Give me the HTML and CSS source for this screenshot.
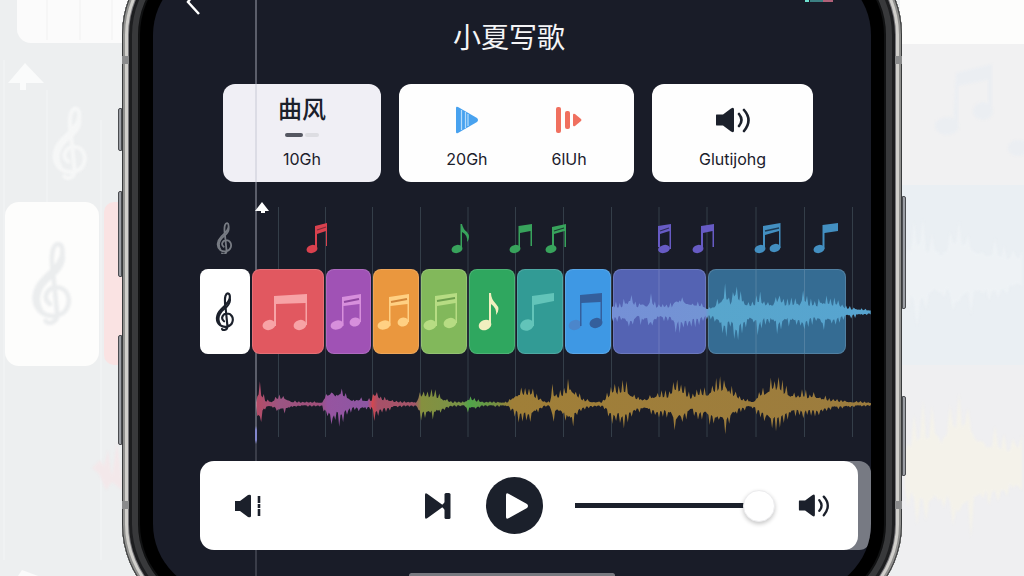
FILE: index.html
```html
<!DOCTYPE html>
<html lang="zh-CN">
<head>
<meta charset="utf-8">
<meta name="viewport" content="width=device-width, initial-scale=1">
<title>小夏写歌</title>
<link rel="stylesheet" href="styles.css">
</head>
<body>
<svg class="defs" width="0" height="0" aria-hidden="true">
  <symbol id="clef" viewBox="0 0 20 40">
    <path d="M9 30C5 27 8 22 12 22C17 22 19 27 17.500 31C16 36 9 37 5 34C0 30 1 23 6 18C10 14 15 10 15 5C15 1 12 0 10.500 4C9 9 10.500 14 11 20L12.500 35C12.500 39 8 40 7 38" fill="none" stroke="currentColor" stroke-width="2.200" stroke-linecap="round"/>
    <path d="M5 34C-1 29 1 22 8 17C13 13 15 9 15 4C18 9 15 14 10 18C4 23 3 28 6 33Z" fill="currentColor"/>
  </symbol>
  <symbol id="speaker" viewBox="0 0 36 28">
    <path d="M1.500 8.500H8L16 2.500Q19 0.500 19 3.500V24.500Q19 27.500 16 25.500L8 19.500H1.500Q1 19.500 1 18.500V9.500Q1 8.500 1.500 8.500Z" fill="currentColor"/>
    <path d="M24 8Q29 14 24 20M29 4Q38 14 29 25" fill="none" stroke="currentColor" stroke-width="2.600" stroke-linecap="round"/>
  </symbol>
</svg>

<svg class="backdrop" viewBox="0 0 1024 576" preserveAspectRatio="xMidYMid slice" aria-hidden="true">
  <rect width="1024" height="576" fill="#edeff0"/>
  <rect x="17" y="-30" width="200" height="73" rx="14" fill="#fbfbfb"/>
  <path d="M47 0V40M80 0V40M112 0V40" stroke="#f6f6f6" stroke-width="2"/>
  <path d="M25 63L44 83H26V90H20V83H8Z" fill="#fafbfb"/>
  <path d="M4 60V560M47 90V202M101 120V560" stroke="#f0f2f3" stroke-width="2"/>
  <g color="#f6f7f7" class="soft"><use href="#clef" x="47" y="106" width="46" height="74"/></g>
  <rect x="104" y="202" width="40" height="163" rx="10" fill="#fae3e3"/>
  <rect x="5" y="202" width="94" height="164" rx="14" fill="#fdfdfc"/>
  <g color="#ebedee" class="soft"><use href="#clef" x="27" y="241" width="50" height="84"/></g>
  <path class="soft" d="M92 468L100 460L104 466L108 450L112 476L117 442L122 480V490L112 482L106 490L99 474Z" fill="#f3e8ea"/>
  <path d="M22 570L38 576H18Z" fill="#fbfbfb"/>
  <rect x="900" width="124" height="44" fill="#fdfdfc"/>
  <rect x="900" y="44" width="124" height="141" fill="#f1f1f2"/>
  <rect x="900" y="185" width="124" height="180" fill="#eaeff3"/>
  <rect x="900" y="365" width="124" height="211" fill="#efeff1"/>
  <g class="soft" fill="#ebeef2">
    <path d="M956 73L992 64V112H988V80L958 86V128H953Z"/>
    <ellipse cx="947" cy="126" rx="12" ry="9"/><ellipse cx="983" cy="111" rx="10" ry="9"/><ellipse cx="1018" cy="148" rx="10" ry="8"/>
  </g>
  <path id="wave-back-cool" class="soft" fill="#eef2f5"/>
  <path id="wave-back-warm" class="soft" fill="#f4f2ea"/>
</svg>

<div class="phone">
  <i class="key key-left key-a"></i><i class="key key-left key-b"></i><i class="key key-left key-c"></i>
  <i class="key key-right key-d"></i><i class="key key-right key-e"></i>
  <i class="band band-left band-top"></i><i class="band band-right band-top"></i>
  <i class="band band-left band-low"></i><i class="band band-right band-low"></i>
  <main class="screen">
    <header class="top">
      <button class="icon-btn" type="button" aria-label="返回">
        <svg width="16" height="18" viewBox="0 0 16 18"><path d="M8 -5L3 2L14 14" fill="none" stroke="#fff" stroke-width="2.500"/></svg>
      </button>
      <h1 class="title">小夏写歌</h1>
      <svg class="status" width="28" height="3" viewBox="0 0 28 3" aria-hidden="true"><path d="M0 0H4V2H0Z" fill="#6ee0cf"/><path d="M5 0H18V2H5Z" fill="#3c7f82"/><path d="M18 0H28V2H18Z" fill="#b06078"/></svg>
    </header>

    <section class="cards">
      <button class="card card-style" type="button">
        <span class="card-title">曲风</span>
        <span class="pager"><i class="dash dash-on"></i><i class="dash"></i></span>
        <span class="label">10Gh</span>
      </button>
      <div class="card card-pair">
        <button class="option" type="button">
          <svg width="24" height="28" viewBox="0 0 24 28"><path d="M1 2Q1 0 3 1L22 12Q24 14 22 16L3 27Q1 28 1 26Z" fill="#48a2ef"/><path d="M6.500 4V24M10.500 6V22M13 8V20" stroke="#b5dcfb" stroke-width="1.200"/></svg>
          <span class="label">20Gh</span>
        </button>
        <button class="option" type="button">
          <svg width="26" height="28" viewBox="0 0 26 28"><g fill="#f0705f"><rect x="0" y="1" width="5" height="26" rx="2"/><rect x="9" y="5" width="5" height="18" rx="2"/><path d="M17 9Q17 7 19 8L25 13Q26 14 25 15L19 20Q17 21 17 19Z"/></g></svg>
          <span class="label">6lUh</span>
        </button>
      </div>
      <button class="card card-sound" type="button">
        <svg width="36" height="28"><use href="#speaker"/></svg>
        <span class="label">Glutijohg</span>
      </button>
    </section>

    <section class="timeline">
      <svg class="rules" viewBox="0 0 671 230" preserveAspectRatio="none" aria-hidden="true"><path d="M78.500 0V230M125.500 0V230M172.500 0V230M220.500 0V230M268 0V230M315.500 0V230M363.500 0V230M411.500 0V230M459 0V230M507 0V230M556 0V230M604.500 0V230M652.500 0V230" stroke="#343e49" stroke-width="1"/></svg>
      <svg class="notes" viewBox="0 0 671 32" aria-hidden="true">
        <g color="#777b83"><use href="#clef" x="16" y="0" width="17" height="33"/></g>
        <g fill="#d9414e"><ellipse cx="112" cy="27" rx="5.500" ry="4" transform="rotate(-15 112 27)"/><path d="M115 4L127 1V24H126V9L117 12V27H115Z"/><path d="M117 8L126 5" stroke="#7c2b3a" stroke-width="1.200"/></g>
        <g fill="#38a35c"><ellipse cx="257" cy="27" rx="5.500" ry="4" transform="rotate(-15 257 27)"/><path d="M260.500 2H262Q263 7 267 10Q271 15 267 20Q268 13 262 10V27H260.500Z"/></g>
        <g fill="#38a35c"><ellipse cx="315" cy="27" rx="5.500" ry="4" transform="rotate(-15 315 27)"/><path d="M318.500 4L332 2V24H330.500V9L320 11V27H318.500Z"/></g>
        <g fill="#38a35c"><ellipse cx="351" cy="27" rx="5.500" ry="4" transform="rotate(-15 351 27)"/><path d="M352 5L366 2V25H364.500V9L354 12V27H352Z"/><path d="M354 9L364 6" stroke="#1b3b31" stroke-width="1.200"/></g>
        <g fill="#675bc4"><ellipse cx="464" cy="27" rx="6" ry="4" transform="rotate(-15 464 27)"/><path d="M458 4L471 2V27H469.500V9L460 12V25H458Z"/><path d="M460 9L469 6" stroke="#2c2c57" stroke-width="1.200"/></g>
        <g fill="#675bc4"><ellipse cx="498" cy="27" rx="5.500" ry="4" transform="rotate(-15 498 27)"/><path d="M501 4L514 2V25H512.500V9L503 11V27H501Z"/></g>
        <g fill="#438fc1"><ellipse cx="560" cy="27" rx="5.500" ry="4" transform="rotate(-15 560 27)"/><ellipse cx="575" cy="26" rx="5.500" ry="4" transform="rotate(-15 575 26)"/><path d="M563 4L580.500 1V26H579V9L565 13V27H563Z"/><path d="M565 9L579 6" stroke="#1b3a55" stroke-width="1.400"/></g>
        <g fill="#438fc1"><ellipse cx="619" cy="27" rx="5.500" ry="4" transform="rotate(-15 619 27)"/><path d="M622.500 3L638 1V9L624.500 11V27H622.500Z"/></g>
      </svg>

      <div class="lane">
        <div class="clip clip-clef"><svg width="20" height="39"><use href="#clef"/></svg></div>
        <div class="clip clip-note clip-red"><svg width="46" height="40" viewBox="0 0 46 40"><g fill="#f7a3a6"><ellipse cx="7" cy="33" rx="6.500" ry="5" transform="rotate(-15 7 33)"/><ellipse cx="38" cy="33" rx="6.500" ry="5" transform="rotate(-15 38 33)"/><path d="M12 4L45 2V33H43.500V11L14 12V34H12Z"/></g></svg></div>
        <div class="clip clip-note clip-purple"><svg width="33" height="40" viewBox="0 0 33 40"><g fill="#d78fdc"><ellipse cx="8" cy="33" rx="6.500" ry="4.500" transform="rotate(-15 8 33)"/><ellipse cx="26" cy="30" rx="5.500" ry="4.500" transform="rotate(-15 26 30)"/><path d="M13 5L32 2V30H30.500V12L14.500 14V34H13Z"/></g><path d="M15 10L30 7" stroke="#8f469f" stroke-width="1.800"/></svg></div>
        <div class="clip clip-note clip-orange"><svg width="33" height="40" viewBox="0 0 33 40"><g fill="#ffd083"><ellipse cx="7" cy="33" rx="6.500" ry="4.500" transform="rotate(-15 7 33)"/><ellipse cx="26" cy="30" rx="5.500" ry="4.500" transform="rotate(-15 26 30)"/><path d="M12 5L32 2V30H30.500V12L13.500 14V34H12Z"/></g><path d="M14 10L30 7" stroke="#d08439" stroke-width="1.800"/></svg></div>
        <div class="clip clip-note clip-lime"><svg width="36" height="40" viewBox="0 0 36 40"><g fill="#b7dc83"><ellipse cx="7" cy="33" rx="6.500" ry="5" transform="rotate(-15 7 33)"/><ellipse cx="27" cy="31" rx="6.500" ry="5" transform="rotate(-15 27 31)"/><path d="M12 4L34 1V31H32.500V11L14 14V34H12Z"/></g><path d="M14 9L32 6" stroke="#6c9e4d" stroke-width="1.800"/></svg></div>
        <div class="clip clip-note clip-green"><svg width="24" height="40" viewBox="0 0 24 40"><g fill="#f1efbf"><ellipse cx="8" cy="33" rx="6.500" ry="5" transform="rotate(-20 8 33)"/><path d="M12 1H14Q14 7 19 12Q24 17 19 23Q20 16 14 12V34H12Z"/></g></svg></div>
        <div class="clip clip-note clip-teal"><svg width="36" height="40" viewBox="0 0 36 40"><g fill="#62c4b9"><ellipse cx="8" cy="33" rx="7" ry="5.500" transform="rotate(-20 8 33)"/><path d="M13 4L35 1V9L15 13V34H13Z"/></g></svg></div>
        <div class="clip clip-note clip-blue"><svg width="36" height="40" viewBox="0 0 36 40"><ellipse cx="8" cy="33" rx="6.500" ry="5" transform="rotate(-15 8 33)" fill="#4b86cb"/><g fill="#345f9c"><ellipse cx="29" cy="31" rx="6.500" ry="5" transform="rotate(-15 29 31)"/><path d="M13 3L35 1V31H33.500V10L14.500 11V34H13Z"/></g></svg></div>
        <div class="clip clip-indigo"></div>
        <div class="clip clip-steel"></div>
        <svg class="lane-wave" viewBox="0 0 671 85" preserveAspectRatio="none" aria-hidden="true">
          <defs><linearGradient id="cool" gradientUnits="userSpaceOnUse" x1="412" y1="0" x2="671" y2="0"><stop offset="0" stop-color="#7590d6"/><stop offset=".36" stop-color="#7394d4"/><stop offset=".38" stop-color="#58a6cc"/><stop offset="1" stop-color="#57a4d0"/></linearGradient></defs>
          <path d="M459 1V84M556 1V84M604.500 1V84" stroke="#fff" stroke-opacity=".14"/>
          <path id="wave-vocal" fill="url(#cool)"/>
        </svg>
      </div>

      <svg class="mix" viewBox="0 0 671 62" preserveAspectRatio="none" aria-hidden="true">
        <defs><linearGradient id="warm" gradientUnits="userSpaceOnUse" x1="0" y1="0" x2="671" y2="0">
          <stop offset=".08" stop-color="#b84a62"/><stop offset=".12" stop-color="#9b5583"/><stop offset=".175" stop-color="#a04f78"/><stop offset=".19" stop-color="#9654a0"/><stop offset=".25" stop-color="#8d57a3"/><stop offset=".257" stop-color="#d34750"/><stop offset=".265" stop-color="#a75068"/><stop offset=".32" stop-color="#a5566a"/><stop offset=".33" stop-color="#85903f"/><stop offset=".39" stop-color="#789348"/><stop offset=".402" stop-color="#50a54a"/><stop offset=".44" stop-color="#748f42"/><stop offset=".465" stop-color="#a07f38"/><stop offset="1" stop-color="#9c7c3e"/></linearGradient></defs>
        <path id="wave-mix" fill="url(#warm)"/>
      </svg>
    </section>

    <section class="dock">
      <div class="player">
        <button class="icon-btn" type="button" aria-label="静音"><svg width="28" height="24" viewBox="0 0 28 24"><path d="M1 7H6L14 1Q17 0 17 2V22Q17 24 14 23L6 17H1Z" fill="#1b202b"/><path d="M25 2V22" stroke="#1b202b" stroke-width="2.600" stroke-dasharray="7 1 4 1"/></svg></button>
        <button class="icon-btn skip" type="button" aria-label="下一首"><svg width="28" height="28" viewBox="0 0 28 28"><path d="M1 3Q1 0 3.500 2L18 12.500Q20.500 14 18 15.500L3.500 26Q1 28 1 25Z" fill="#1b202b"/><rect x="20.500" y="1" width="6" height="26" rx="1.500" fill="#1b202b"/><path d="M17 14L21 10V18Z" fill="#1b202b"/></svg></button>
        <button class="icon-btn play" type="button" aria-label="播放"><svg width="24" height="28" viewBox="0 0 24 28"><path d="M1 3Q1 0 4 2L22 12Q24 14 22 16L4 26Q1 28 1 25Z" fill="#fff"/></svg></button>
        <input class="volume" type="range" min="0" max="100" value="100" aria-label="音量">
        <button class="icon-btn" type="button" aria-label="最大音量"><svg class="loud" width="32" height="25"><use href="#speaker"/></svg></button>
      </div>
      <div class="next-panel"></div>
    </section>
    <div class="home"></div>

    <div class="playhead" aria-hidden="true">
      <svg class="flag" width="16" height="13" viewBox="0 0 16 13"><path d="M8 1L15 10H11V12H7V10H1Z" fill="#fff"/></svg>
    </div>
  </main>
</div>
<script src="waves.js"></script>
</body>
</html>
```
FILE: styles.css
```css
* { box-sizing: border-box; }
html { height: 100%; overflow: hidden; }
body {
  position: relative;
  margin: 0;
  height: 100%;
  overflow: hidden;
  padding: 0 122px;
  background: #edeff0;
  font-family: Inter, Roboto, "Noto Sans CJK SC", sans-serif;
  color: #1b202b;
}
button {
  border: 0;
  padding: 0;
  margin: 0;
  background: none;
  color: inherit;
  font: inherit;
  cursor: pointer;
}
svg { display: block; }
.defs { position: absolute; }
.backdrop { position: absolute; inset: 0; width: 100%; height: 100%; }
.soft { filter: blur(1px); }

.phone {
  position: relative;
  margin: 0;
  top: -65px;
  padding: 31px;
  border-radius: 100px;
  background: #000;
  box-shadow:
    inset 0 0 0 1px #393b3c,
    inset 0 0 0 3px #8f8f8d,
    inset 0 0 0 6px #d0cfcb,
    inset 0 0 0 7px #77767a,
    inset 0 0 0 10px #1d1e20,
    inset 0 0 0 16px #38393b,
    inset 0 0 0 18px #101112;
}
.key { position: absolute; width: 4px; border: 1px solid #4a4c50; background: #9b9ea4; }
.key-left { left: -4px; border-radius: 2px 0 0 2px; }
.key-right { right: -4px; border-radius: 0 2px 2px 0; }
.key-a { top: 173px; height: 43px; }
.key-b { top: 256px; height: 86px; }
.key-c { top: 400px; height: 110px; }
.key-d { top: 261px; height: 113px; }
.key-e { top: 461px; height: 80px; }
.band { position: absolute; width: 7px; height: 8px; background: #8a8b8c; }
.band-left { left: 0; }
.band-right { right: 0; }
.band-top { top: 121px; }
.band-low { top: 566px; }

.screen {
  position: relative;
  overflow: hidden;
  padding: 34px 0 15px;
  border-radius: 69px;
  background: #191c28;
}
.top {
  display: grid;
  grid-template-columns: 1fr auto 1fr;
  align-items: start;
  height: 84px;
  padding: 0 38px 0 32px;
}
.title {
  margin: 0;
  padding-top: 18px;
  font-size: 28px;
  line-height: 40px;
  font-weight: 400;
  color: #f4f4f6;
}
.status { justify-self: end; }

.cards { display: flex; gap: 18px; padding: 0 58px 0 70px; }
.card {
  display: flex;
  height: 98px;
  border-radius: 12px;
  background: #fefefe;
}
.card-style { flex: 158; flex-direction: column; align-items: center; background: #f0eff5; padding-top: 10px; }
.card-pair { flex: 235; justify-content: center; gap: 64px; }
.card-sound { flex: 161; flex-direction: column; align-items: center; padding-top: 22px; gap: 14px; }
.card-title { font-size: 24px; line-height: 32px; font-weight: 500; }
.pager { display: flex; gap: 2px; padding: 7px 0 11px; }
.dash { width: 14px; height: 4px; border-radius: 2px; background: #dddde2; }
.dash-on { width: 18px; background: #555761; }
.label { font-size: 16px; line-height: 22px; }
.option { display: flex; flex-direction: column; align-items: center; padding-top: 22px; gap: 14px; }

.timeline { position: relative; margin: 25px 0 0 47px; padding: 15px 0 2px; }
.rules { position: absolute; inset: 0; width: 100%; height: 100%; }
.notes { position: relative; width: 100%; margin-bottom: 15px; }
.lane {
  position: relative;
  z-index: 2;
  display: grid;
  grid-template-columns: 50fr 72fr 45fr 46fr 46fr 46fr 46fr 46fr 93fr 138fr;
  gap: 2px;
  height: 85px;
  padding-right: 25px;
}
.clip {
  display: flex;
  align-items: center;
  justify-content: center;
  min-width: 0;
  border-radius: 8px;
  box-shadow: inset 0 0 0 1px rgba(255, 255, 255, 0.14);
}
.clip-note { padding-right: 6px; }
.clip-clef { background: #fff; }
.clip-red { background: #e15860; }
.clip-purple { background: #a052b5; }
.clip-orange { background: #ea973e; }
.clip-lime { background: #82b85b; }
.clip-green { background: #2fa75f; }
.clip-teal { background: #329b95; }
.clip-blue { background: #3e98e4; }
.clip-indigo { background: #5463b3; }
.clip-steel { background: #356c93; }
.lane-wave { position: absolute; inset: 0; width: 100%; height: 100%; }
.mix { position: relative; width: 100%; height: 62px; margin-top: 19px; }

.dock { position: relative; z-index: 2; display: flex; margin: 24px 0 0 47px; }
.player {
  position: relative;
  z-index: 1;
  flex: 1;
  display: flex;
  align-items: center;
  height: 89px;
  padding: 0 28px 0 34px;
  border-radius: 14px;
  background: #fff;
}
.next-panel { width: 33px; margin-left: -20px; border-radius: 12px; background: #777a83; }
.skip { margin-left: auto; }
.play {
  display: grid;
  place-items: center;
  width: 57px;
  height: 57px;
  margin: 0 32px 0 34px;
  padding-left: 4px;
  border-radius: 50%;
  background: #1b202b;
}
.volume {
  appearance: none;
  width: 200px;
  height: 32px;
  margin: 0 23px 0 0;
  background: linear-gradient(#1b202b, #1b202b) left / 94% 5px no-repeat;
}
.volume::-webkit-slider-thumb {
  appearance: none;
  width: 32px;
  height: 32px;
  border-radius: 50%;
  border: 1px solid #ececee;
  background: #fff;
  box-shadow: 0 2px 4px rgba(0, 0, 0, 0.22);
}
.home { width: 206px; height: 5px; margin: 23px auto 0; border-radius: 3px; background: #777980; }

.playhead {
  position: absolute;
  z-index: 1;
  top: 0;
  bottom: 0;
  left: 102px;
  width: 2px;
  background: linear-gradient(rgba(190, 192, 205, 0.4) 460px, #8286cd 464px, #8286cd 474px, rgba(190, 192, 205, 0.2) 478px);
}
.flag { position: absolute; top: 235px; left: -1px; }
```
FILE: waves.js
```js
// Each envelope is a list of [x, amplitude] pairs along the track.
const vocal = [[412,12],[420,9],[430,21],[438,9],[443,18],[446,11],[450,21],[456,10],[472,10],[475,25],[482,20],[490,17],[497,15],[504,10],[509,6],[516,13],[525,31],[530,16],[536,35],[541,25],[547,14],[554,12],[558,26],[564,15],[570,12],[578,24],[586,14],[592,16],[600,15],[603,25],[610,14],[617,12],[622,20],[630,15],[638,14],[646,7],[655,6],[663,4],[671,3]];
const mix = [[56,4],[59,26],[63,12],[66,5],[72,4],[79,12],[87,9],[92,4],[100,3],[122,3],[125,12],[128,16],[132,27],[136,16],[140,25],[145,15],[150,10],[154,5],[157,9],[165,7],[172,6],[174,20],[180,10],[188,8],[195,4],[205,3],[216,3],[220,17],[226,16],[235,16],[242,9],[252,3],[264,3],[268,9],[276,6],[282,3],[308,3],[314,14],[322,22],[326,17],[330,22],[337,11],[345,3],[350,3],[352,24],[356,11],[366,22],[371,31],[376,16],[383,7],[392,4],[402,3],[406,10],[414,27],[418,19],[422,30],[430,19],[436,9],[448,9],[455,15],[462,14],[470,16],[476,31],[482,23],[488,14],[492,10],[497,17],[506,18],[516,27],[526,33],[532,20],[540,9],[548,5],[554,5],[558,14],[564,20],[569,29],[578,33],[585,22],[592,15],[598,12],[604,17],[610,12],[617,15],[624,9],[632,6],[640,5],[650,4],[671,2]];
const backCool = [[905,40],[920,60],[930,40],[946,35],[958,65],[970,45],[985,40],[1005,30],[1024,26]];
const backWarm = [[905,40],[924,70],[944,55],[960,95],[975,65],[992,45],[1010,36],[1024,45]];

function level(points, x) {
  let i = 1;
  while (i < points.length - 1 && points[i][0] < x) i++;
  const [x0, a0] = points[i - 1];
  const [x1, a1] = points[i];
  return a0 + (a1 - a0) * Math.min(1, Math.max(0, (x - x0) / (x1 - x0)));
}

function noise(n) {
  const s = Math.sin(n * 12.9898) * 43758.5453;
  return s - Math.floor(s);
}

// Most samples stay near the body of the wave; a few rise to the envelope.
function reach(n, turn) {
  return n % 3 === turn && noise(n) > 0.25 ? 0.72 + noise(n + 7) * 0.28 : 0.4 + noise(n) * 0.16;
}

function draw(id, points, mid, step) {
  const start = points[0][0];
  const end = points[points.length - 1][0];
  const upper = [];
  const lower = [];
  for (let x = start, n = 0; x <= end; x += step, n++) {
    const a = level(points, x);
    upper.push(x + " " + (mid - a * reach(n, 0)).toFixed(1));
    lower.unshift(x + " " + (mid + a * reach(n + 600, 1)).toFixed(1));
  }
  document.getElementById(id).setAttribute("d", "M" + upper.concat(lower).join("L") + "Z");
}

draw("wave-vocal", vocal, 43, 1.3);
draw("wave-mix", mix, 31, 1.3);
draw("wave-back-cool", backCool, 272, 3);
draw("wave-back-warm", backWarm, 468, 3);
```
